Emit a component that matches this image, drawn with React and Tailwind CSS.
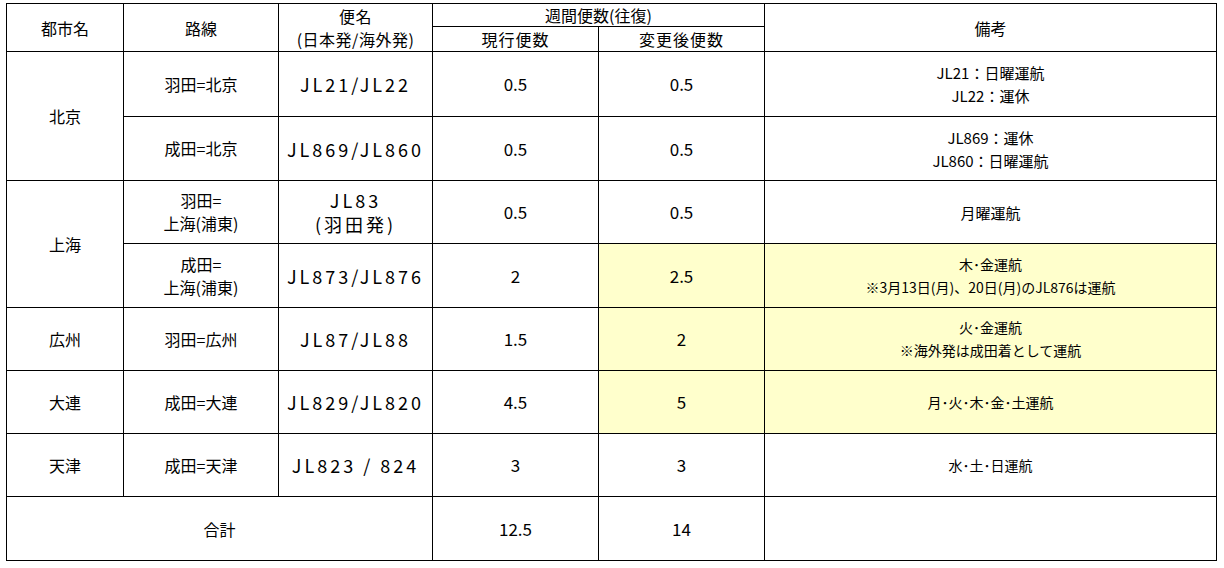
const font = { fontFamily: '"Noto Sans CJK JP", "Noto Sans", sans-serif' };

const rows = [
  { city: "北京", span: 2, route: ["羽田=北京"], flight: ["JL21/JL22"], cur: "0.5", next: "0.5", note: ["JL21：日曜運航", "JL22：運休"], h: "h-[65px]" },
  { route: ["成田=北京"], flight: ["JL869/JL860"], cur: "0.5", next: "0.5", note: ["JL869：運休", "JL860：日曜運航"], h: "h-[64px]" },
  { city: "上海", span: 2, route: ["羽田=", "上海(浦東)"], flight: ["JL83", "(羽田発)"], cur: "0.5", next: "0.5", note: ["月曜運航"], h: "h-[63px]" },
  { route: ["成田=", "上海(浦東)"], flight: ["JL873/JL876"], cur: "2", next: "2.5", hl: true, small: true, note: ["木･金運航", "※3月13日(月)、20日(月)のJL876は運航"], h: "h-[64px]" },
  { city: "広州", span: 1, route: ["羽田=広州"], flight: ["JL87/JL88"], cur: "1.5", next: "2", hl: true, small: true, note: ["火･金運航", "※海外発は成田着として運航"], h: "h-[63px]" },
  { city: "大連", span: 1, route: ["成田=大連"], flight: ["JL829/JL820"], cur: "4.5", next: "5", hl: true, small: true, note: ["月･火･木･金･土運航"], h: "h-[63px]" },
  { city: "天津", span: 1, route: ["成田=天津"], flight: ["JL823 / 824"], cur: "3", next: "3", small: true, note: ["水･土･日運航"], h: "h-[63px]" },
];

const Lines = ({ items, className = "" }) => (
  <div className={"flex flex-col items-center leading-[23px] " + className}>
    {items.map((t, i) => (
      <span key={i} className="whitespace-nowrap">{t}</span>
    ))}
  </div>
);

export default function App() {
  return (
    <div className="w-[1224px] h-[568px] bg-white pt-[3px] pl-[6px] text-black text-[16px]" style={font}>
      <table className="table-fixed border-collapse w-[1210px] text-center">
        <colgroup>
          <col className="w-[117px]" />
          <col className="w-[155px]" />
          <col className="w-[154px]" />
          <col className="w-[166px]" />
          <col className="w-[166px]" />
          <col className="w-[452px]" />
        </colgroup>
        <thead>
          <tr className="h-[23px]">
            <th rowSpan={2} className="border border-black font-normal">都市名</th>
            <th rowSpan={2} className="border border-black font-normal">路線</th>
            <th rowSpan={2} className="border border-black font-normal">
              <Lines items={["便名", "(日本発/海外発)"]} className="tracking-[0.5px]" />
            </th>
            <th colSpan={2} className="border border-black font-normal leading-[20px]">週間便数(往復)</th>
            <th rowSpan={2} className="border border-black font-normal">備考</th>
          </tr>
          <tr className="h-[25px]">
            <th className="border border-black font-normal leading-[20px] tracking-[1px]">現行便数</th>
            <th className="border border-black font-normal leading-[20px] tracking-[1px]">変更後便数</th>
          </tr>
        </thead>
        <tbody>
          {rows.map((r, i) => (
            <tr key={i} className={r.h}>
              {r.city && (
                <td rowSpan={r.span} className="border border-black">{r.city}</td>
              )}
              <td className="border border-black">
                <Lines items={r.route} />
              </td>
              <td className="border border-black text-[18px]">
                <Lines items={r.flight} className="tracking-[3px] leading-[24px]" />
              </td>
              <td className="border border-black text-[17px]">{r.cur}</td>
              <td className={"border border-black text-[17px] " + (r.hl ? "bg-[#ffffcc]" : "")}>{r.next}</td>
              <td className={"border border-black " + (r.small ? "text-[14px] " : "text-[15px] ") + (r.hl ? "bg-[#ffffcc]" : "")}>
                <Lines items={r.note} />
              </td>
            </tr>
          ))}
          <tr className="h-[64px]">
            <td colSpan={3} className="border border-black">合計</td>
            <td className="border border-black text-[17px]">12.5</td>
            <td className="border border-black text-[17px]">14</td>
            <td className="border border-black"></td>
          </tr>
        </tbody>
      </table>
    </div>
  );
}
